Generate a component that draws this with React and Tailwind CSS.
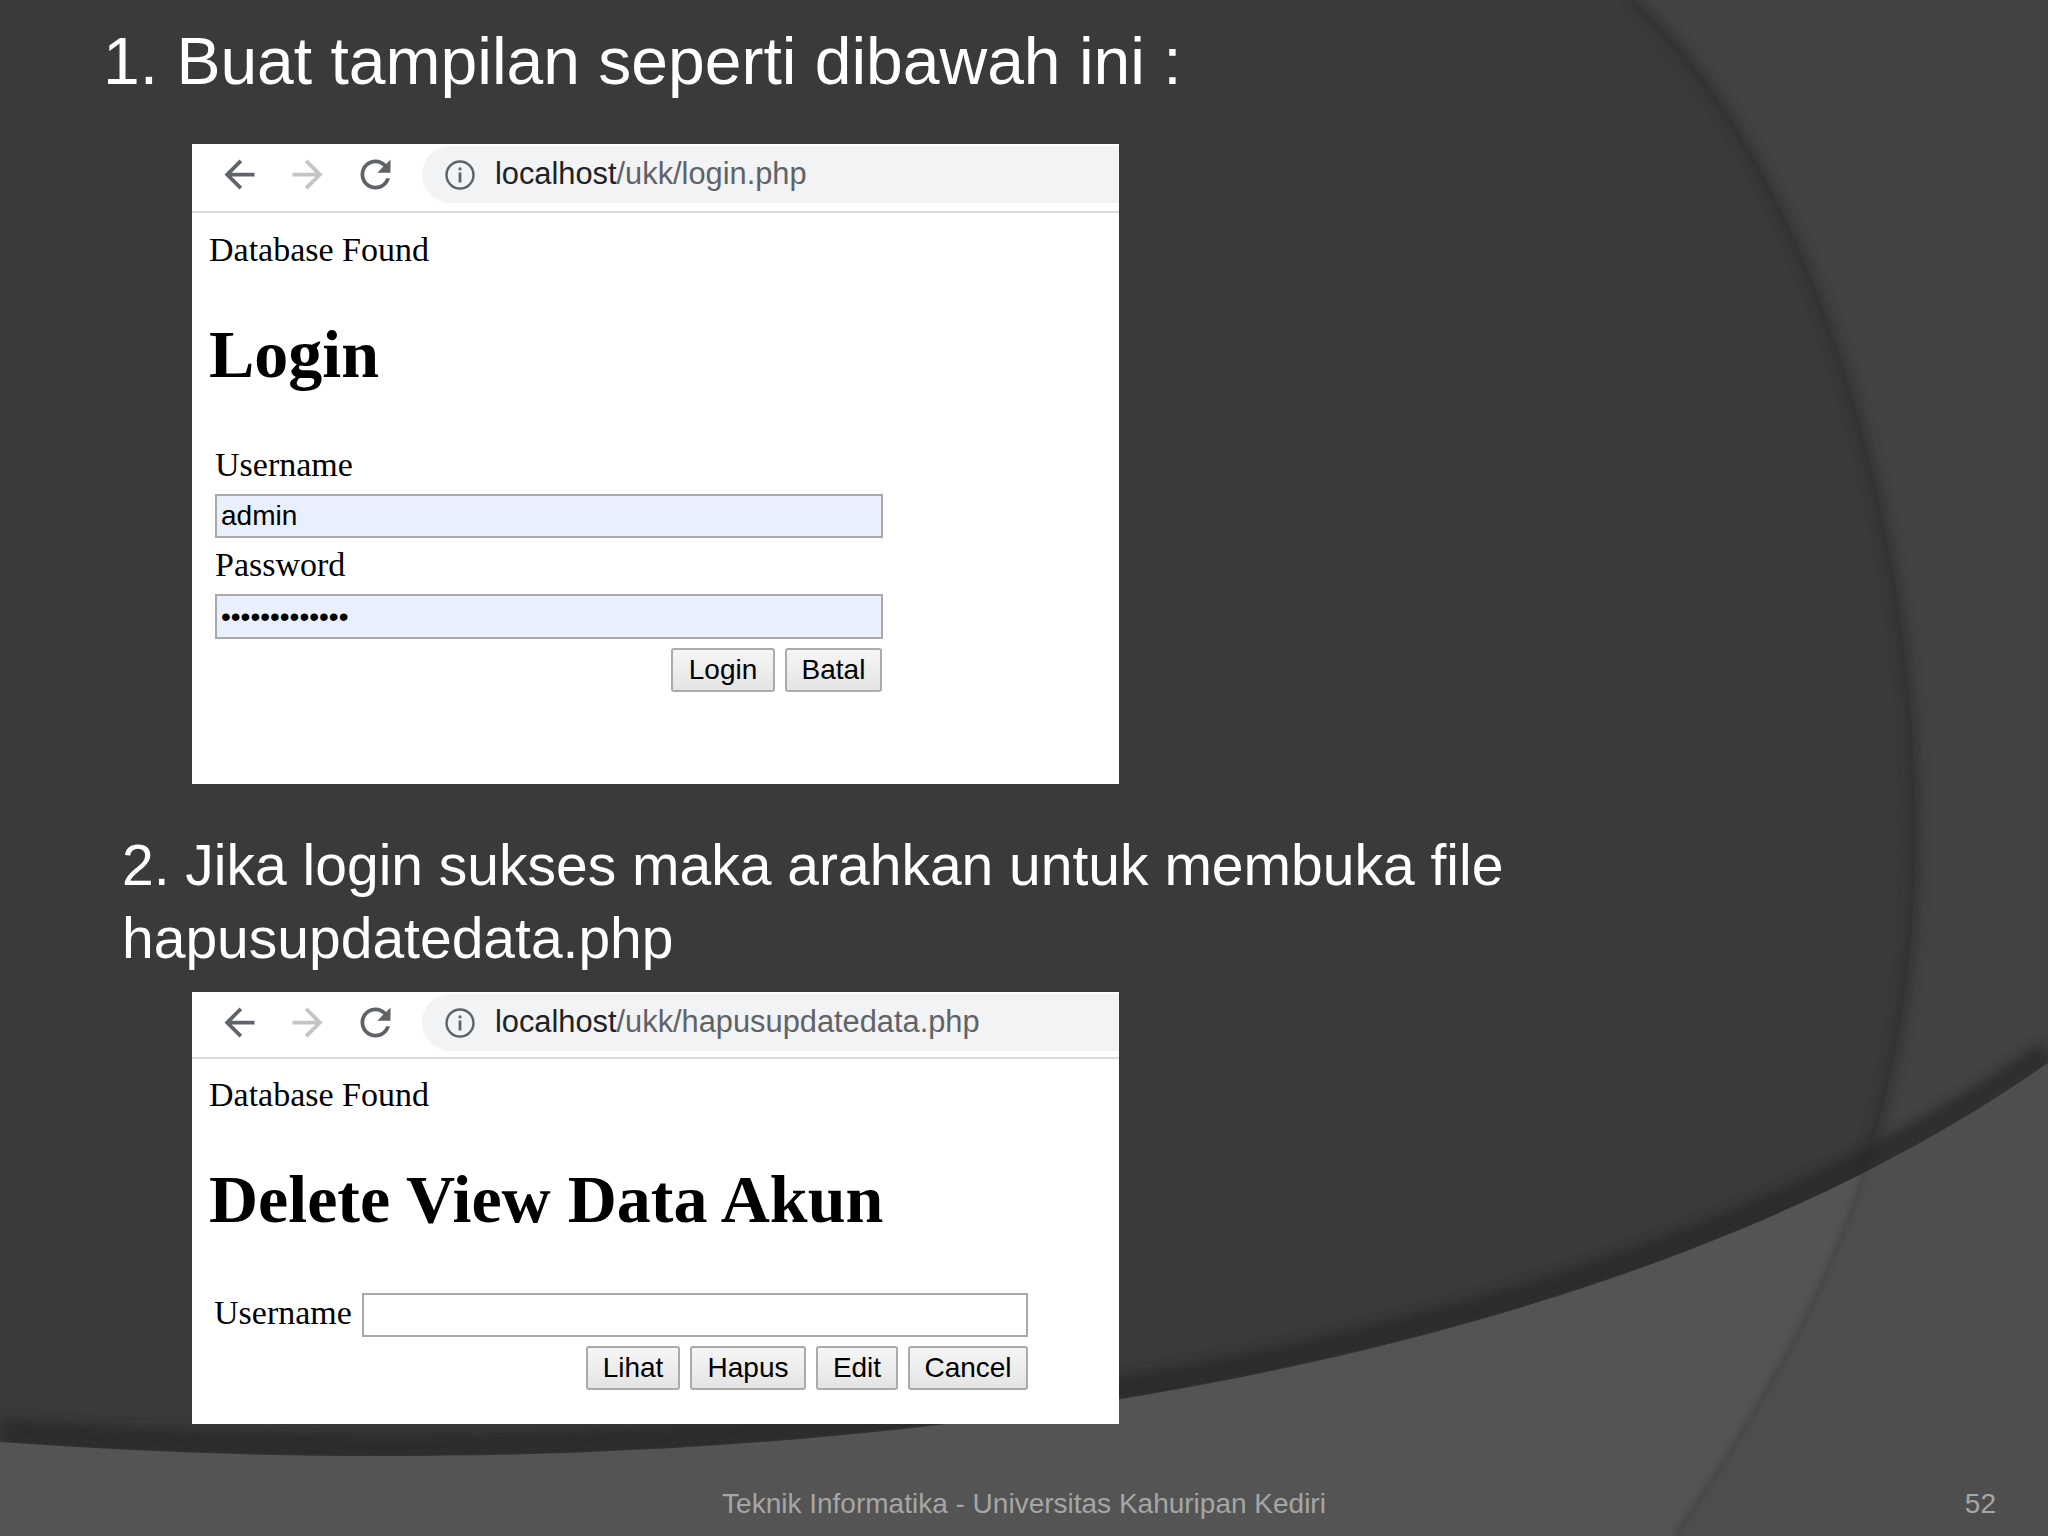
import React from "react";

function Background() {
  const ellipse =
    "M1633 0 C1800 150 1916 500 1916 833 C1916 1150 1800 1350 1675 1536";
  const band = "M0 1442 C800 1500 1600 1380 2048 1063";
  return (
    <svg
      className="absolute inset-0 w-full h-full"
      viewBox="0 0 2048 1536"
      preserveAspectRatio="none"
    >
      <defs>
        <filter id="blur6" x="-10%" y="-10%" width="120%" height="120%">
          <feGaussianBlur stdDeviation="6" />
        </filter>
        <filter id="blur3" x="-10%" y="-10%" width="120%" height="120%">
          <feGaussianBlur stdDeviation="3" />
        </filter>
        <clipPath id="bandClip">
          <path d={band + " L2048 1536 L0 1536 Z"} />
        </clipPath>
      </defs>
      <rect width="2048" height="1536" fill="#434343" />
      <path d={ellipse + " L0 1536 L0 0 Z"} fill="#3a3a3a" />
      <path
        d={ellipse}
        stroke="#2a2a2a"
        strokeWidth="10"
        fill="none"
        filter="url(#blur6)"
        opacity="0.7"
      />
      <path
        d="M0 1432 C800 1490 1600 1370 2048 1053"
        stroke="#262626"
        strokeWidth="26"
        fill="none"
        filter="url(#blur6)"
        opacity="0.75"
      />
      <path d={band + " L2048 1536 L0 1536 Z"} fill="#545454" />
      <g clipPath="url(#bandClip)">
        <path d={ellipse + " L2048 1536 L2048 0 Z"} fill="#4e4e4e" />
        <path
          d={ellipse}
          stroke="#444444"
          strokeWidth="5"
          fill="none"
          filter="url(#blur3)"
        />
      </g>
    </svg>
  );
}

function BackIcon({ color }) {
  return (
    <svg width="45" height="45" viewBox="0 0 24 24" fill={color}>
      <path d="M20 11H7.83l5.59-5.59L12 4l-8 8 8 8 1.41-1.41L7.83 13H20v-2z" />
    </svg>
  );
}

function ForwardIcon({ color }) {
  return (
    <svg width="45" height="45" viewBox="0 0 24 24" fill={color}>
      <path d="M4 11h12.17l-5.59-5.59L12 4l8 8-8 8-1.41-1.41L16.17 13H4v-2z" />
    </svg>
  );
}

function ReloadIcon({ color }) {
  return (
    <svg width="45" height="45" viewBox="0 0 24 24" fill={color}>
      <path d="M17.65 6.35C16.2 4.9 14.21 4 12 4c-4.42 0-7.990 3.58-7.99 8s3.57 8 7.99 8c3.73 0 6.84-2.55 7.73-6h-2.08c-.82 2.33-3.04 4-5.65 4-3.31 0-6-2.690-6-6s2.69-6 6-6c1.66 0 3.14.69 4.22 1.78L13 11h7V4l-2.35 2.35z" />
    </svg>
  );
}

function InfoIcon() {
  return (
    <svg width="36" height="36" viewBox="0 0 36 36">
      <circle cx="18" cy="18" r="13.5" fill="none" stroke="#5f6368" strokeWidth="2.4" />
      <rect x="16.6" y="10.5" width="2.8" height="2.8" fill="#5f6368" />
      <rect x="16.6" y="15.5" width="2.8" height="10" fill="#5f6368" />
    </svg>
  );
}

function Toolbar({ height, host, path }) {
  return (
    <div
      className={
        "flex items-start border-b-2 border-[#dadce0] bg-white " + height
      }
    >
      <div className="flex items-center h-[60px] pl-[25px]">
        <BackIcon color="#5f6368" />
        <div className="ml-[23px]">
          <ForwardIcon color="#c4c4c4" />
        </div>
        <div className="ml-[23px]">
          <ReloadIcon color="#5f6368" />
        </div>
      </div>
      <div className="ml-[24px] mt-[2px] flex-1 h-[57px] rounded-l-full bg-[#f1f3f4] flex items-center pl-[20px]">
        <InfoIcon />
        <div className="ml-[17px] text-[30.8px] leading-none font-['Liberation_Sans',Arial,sans-serif]">
          <span className="text-[#202124]">{host}</span>
          <span className="text-[#5f6368]">{path}</span>
        </div>
      </div>
    </div>
  );
}

function Button({ label, width }) {
  return (
    <div
      className={
        "h-[44px] flex items-center justify-center rounded-[3px] border-2 border-[#ababab] bg-gradient-to-b from-[#f6f6f6] to-[#e4e4e4] text-[28px] leading-none text-black font-['Liberation_Sans',Arial,sans-serif] " +
        width
      }
    >
      {label}
    </div>
  );
}

function LoginBrowser() {
  return (
    <div className="w-[927px] h-[640px] bg-white">
      <Toolbar height="h-[69px]" host="localhost" path="/ukk/login.php" />
      <div className="font-['Liberation_Serif','Times_New_Roman',serif] text-black">
        <div className="pt-[17px] pl-[17px] text-[34px] leading-[40px]">
          Database Found
        </div>
        <div className="mt-[44px] pl-[17px] text-[68px] leading-[80px] font-bold">
          Login
        </div>
        <div className="mt-[51px] pl-[23px] w-[691px] flex flex-col">
          <div className="text-[34px] leading-[40px]">Username</div>
          <div className="mt-[9px] h-[44px] border-2 border-[#a9a9a9] bg-[#e8f0fe] flex items-center pl-[4px] text-[28px] leading-none font-['Liberation_Sans',Arial,sans-serif]">
            admin
          </div>
          <div className="mt-[7px] text-[34px] leading-[40px]">Password</div>
          <div className="mt-[9px] h-[45px] border-2 border-[#a9a9a9] bg-[#e8f0fe] flex items-center pl-[4px] text-[28px] leading-none font-['Liberation_Sans',Arial,sans-serif]">
            •••••••••••••
          </div>
          <div className="mt-[9px] flex justify-end gap-[10px] pr-[1px]">
            <Button label="Login" width="w-[104px]" />
            <Button label="Batal" width="w-[97px]" />
          </div>
        </div>
      </div>
    </div>
  );
}

function DeleteBrowser() {
  return (
    <div className="w-[927px] h-[432px] bg-white">
      <Toolbar
        height="h-[67px]"
        host="localhost"
        path="/ukk/hapusupdatedata.php"
      />
      <div className="font-['Liberation_Serif','Times_New_Roman',serif] text-black">
        <div className="pt-[16px] pl-[17px] text-[34px] leading-[40px]">
          Database Found
        </div>
        <div className="mt-[44px] pl-[17px] text-[68px] leading-[80px] font-bold whitespace-nowrap">
          Delete View Data Akun
        </div>
        <div className="mt-[54px] pl-[22px] w-[836px] flex flex-col">
          <div className="flex items-start">
            <div className="text-[34px] leading-[40px]">Username</div>
            <div className="ml-auto w-[666px] h-[44px] border-2 border-[#a9a9a9] bg-white" />
          </div>
          <div className="mt-[9px] flex justify-end gap-[10px]">
            <Button label="Lihat" width="w-[94px]" />
            <Button label="Hapus" width="w-[116px]" />
            <Button label="Edit" width="w-[82px]" />
            <Button label="Cancel" width="w-[120px]" />
          </div>
        </div>
      </div>
    </div>
  );
}

export default function App() {
  return (
    <div className="relative w-[2048px] h-[1536px] overflow-hidden bg-[#3a3a3a] font-['Liberation_Sans',Arial,sans-serif]">
      <Background />
      <div className="relative flex flex-col h-full">
        <h1 className="mt-[21px] pl-[103px] text-[66px] leading-[80px] text-white font-normal whitespace-nowrap">
          1. Buat tampilan seperti dibawah ini :
        </h1>
        <div className="mt-[43px] ml-[192px]">
          <LoginBrowser />
        </div>
        <p className="mt-[45px] pl-[122px] text-[57px] leading-[73px] text-white whitespace-nowrap">
          2. Jika login sukses maka arahkan untuk membuka file
          <br />
          hapusupdatedata.php
        </p>
        <div className="mt-[17px] ml-[192px]">
          <DeleteBrowser />
        </div>
        <footer className="mt-auto mb-[16px] grid grid-cols-[1fr_auto_1fr] items-baseline text-[28px] leading-[32px] text-[#a6a6a6]">
          <div />
          <div>Teknik Informatika - Universitas Kahuripan Kediri</div>
          <div className="justify-self-end pr-[52px]">52</div>
        </footer>
      </div>
    </div>
  );
}
